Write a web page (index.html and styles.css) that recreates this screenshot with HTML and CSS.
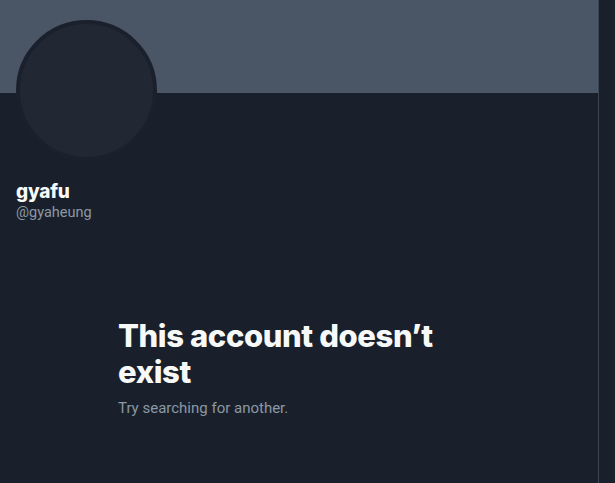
FILE: index.html
```html
<!DOCTYPE html>
<html>
<head>
<meta charset="utf-8">
<link rel="stylesheet" href="styles.css">
</head>
<body>
<div class="page">
  <main class="column">
    <div class="banner"></div>
    <div class="profile">
      <div class="avatar"></div>
      <div class="names">
        <div class="display-name">gyafu</div>
        <div class="handle">@gyaheung</div>
      </div>
    </div>
    <section class="empty">
      <h1 class="empty-title">This account doesn’t exist</h1>
      <p class="empty-sub">Try searching for another.</p>
    </section>
  </main>
  <aside class="side"></aside>
</div>
</body>
</html>
```

FILE: styles.css
```css
html, body {
  margin: 0;
  padding: 0;
  background: #1a202b;
  height: 100%;
}
body {
  font-family: Inter, "Liberation Sans", sans-serif;
  color: #e7e9ea;
  overflow: hidden;
}
.page {
  display: flex;
  height: 483px;
}
.column {
  width: 598px;
  border-right: 1px solid #3b4452;
  flex-shrink: 0;
}
.side {
  flex: 1;
}
.banner {
  height: 93px;
  background: #4a5566;
}
.profile {
  padding: 0 16px;
}
.avatar {
  width: 133px;
  height: 133px;
  border-radius: 50%;
  background: #222833;
  border: 4px solid #1b212c;
  margin-top: -73px;
}
.names {
  margin-top: 20px;
}
.display-name {
  font-size: 19px;
  font-weight: 800;
  line-height: 22px;
  color: #f7f9f9;
  letter-spacing: -0.2px;
}
.handle {
  font-family: Roboto, "Liberation Sans", sans-serif;
  font-size: 14.5px;
  line-height: 18px;
  color: #8b98a5;
  margin-top: 1px;
}
.empty {
  padding: 0 0 0 118px;
  margin-top: 96px;
  width: 340px;
}
.empty-title {
  margin: 0;
  font-size: 31px;
  font-weight: 800;
  line-height: 36px;
  color: #f7f9f9;
  letter-spacing: -0.4px;
}
.empty-sub {
  font-family: Roboto, "Liberation Sans", sans-serif;
  margin: 8px 0 0;
  font-size: 15px;
  line-height: 20px;
  color: #8b98a5;
}
```
